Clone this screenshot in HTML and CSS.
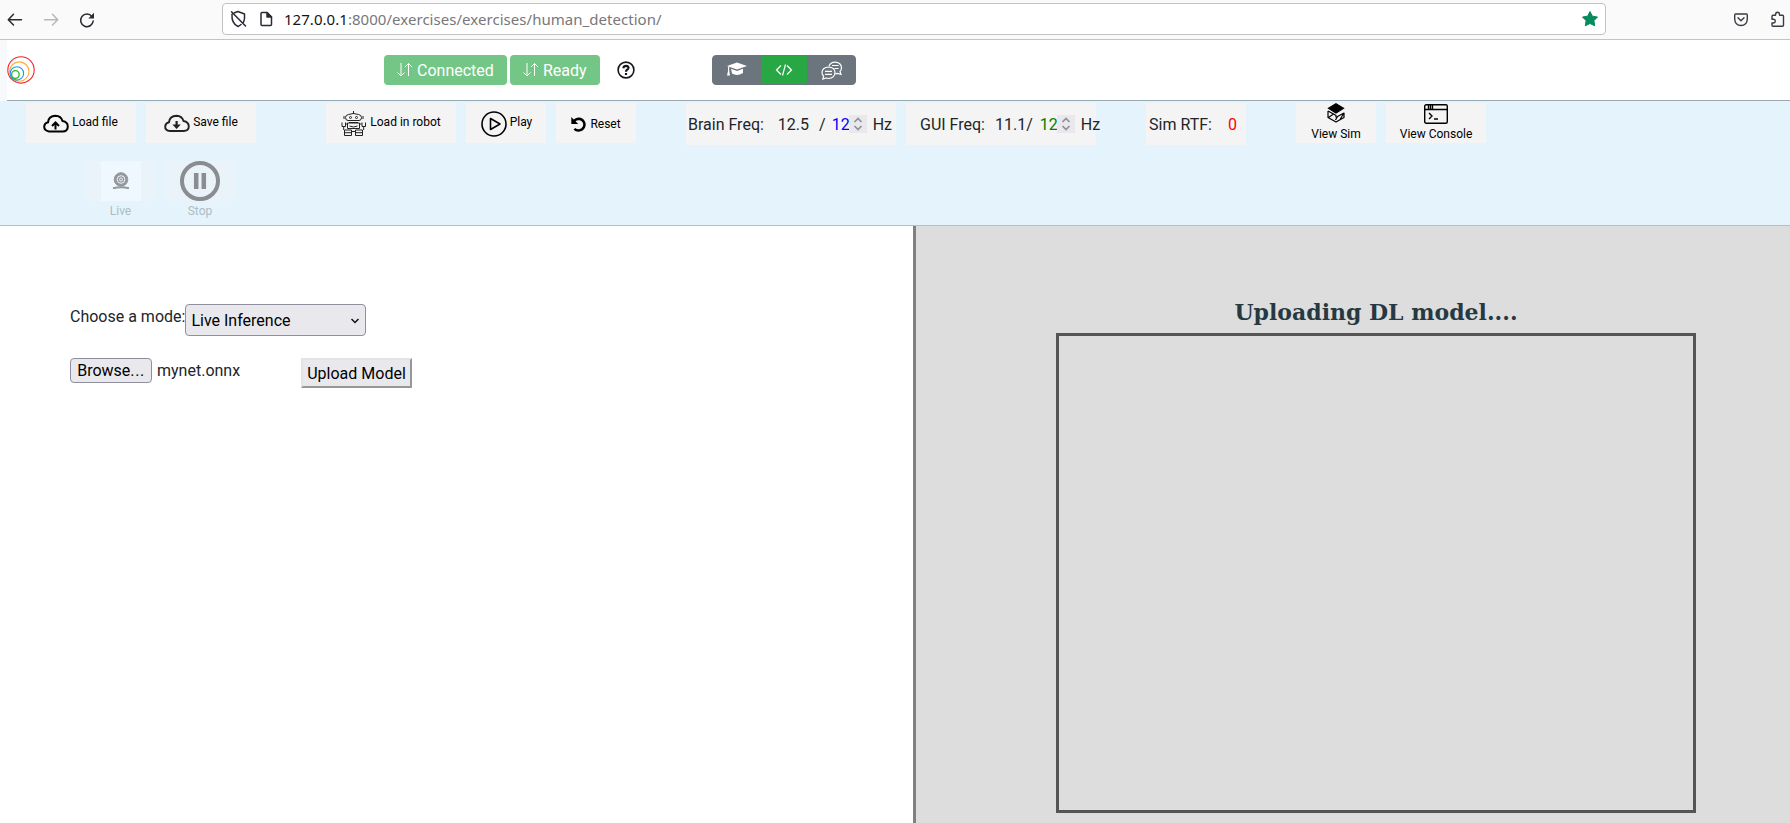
FILE: index.html
```html
<!DOCTYPE html>
<html lang="en">
<head>
<meta charset="utf-8">
<title>Human Detection</title>
<link rel="stylesheet" href="styles.css">
</head>
<body>
<div class="browser">
  <svg class="nav" width="96" height="36" fill="none" stroke="#2b2a33" stroke-width="1.5" stroke-linecap="round" stroke-linejoin="round">
    <path d="M8.500 19.700H21.500M13.500 14.300L8.300 19.700L13.500 25"/>
    <path stroke="#b8b8ba" d="M44.500 19.700H57.500M52.500 14.300L57.700 19.700L52.500 25"/>
    <path d="M92 16.600A6.300 6.300 0 1 0 93.200 21"/><path fill="#2b2a33" stroke="none" d="M94 12.800V18.500H88.300z"/>
  </svg>
  <div class="urlbar">
    <svg class="url-icons" width="52" height="30" fill="none" stroke="#2b2a33" stroke-width="1.500" stroke-linecap="round" stroke-linejoin="round">
      <path d="M11.500 8.800L15 7.500L21.500 10V14.500Q21.200 17 20 19M9 10.300Q8.300 19.500 15 22.500Q16.800 21.600 18 20.500M8.500 7.800L22.500 22"/>
      <path d="M39 8.500H44L48.500 13V20.500Q48.500 21.500 47.500 21.500H39Q38 21.500 38 20.500V9.500Q38 8.500 39 8.500z"/><path fill="#2b2a33" d="M44 8.500V13H48.500z"/>
    </svg>
    <div class="url"><b>127.0.0.1</b>:8000/exercises/exercises/human_detection/</div>
    <svg class="star" width="18" height="18" viewBox="0 0 18 18"><path fill="#058b5e" stroke="#058b5e" stroke-linejoin="round" d="M9 1.500L11.400 6.200L16.500 7L12.900 10.700L13.700 15.800L9 13.500L4.300 15.800L5.100 10.700L1.500 7L6.600 6.200z"/></svg>
  </div>
  <svg class="ext" width="56" height="24" fill="none" stroke="#3b3a43" stroke-width="1.400" stroke-linecap="round" stroke-linejoin="round">
    <path d="M2.700 6H13.300Q14.300 6 14.300 7V11Q14 17.500 8 17.500Q2 17.500 1.700 11V7Q1.700 6 2.700 6zM5 9.800L8 12.700L11 9.800"/>
    <path d="M39 8.500Q39 7.300 40 7.300H42.300Q42.600 7.300 42.600 6.500Q42.600 4.300 44.600 4.300Q46.500 4.300 46.500 6.500Q46.500 7.300 47 7.300H49.500Q50.500 7.300 50.500 8.300V17.300Q50.500 18.300 49.500 18.300H40Q39 18.300 39 17.300V15H40.500Q42.300 14.800 42.300 13Q42.300 11.300 40.500 11.200H39z"/>
  </svg>
</div>
<header class="header">
  <svg class="logo" width="30" height="30" fill="none" stroke-width="1.100">
    <circle cx="14" cy="14.900" r="13.200" stroke="#f5222d"/><circle cx="12.300" cy="16.600" r="9.700" stroke="#fbb034"/><circle cx="9.900" cy="18.400" r="6.700" stroke="#2196e8"/><circle cx="8.400" cy="19.500" r="3.800" stroke="#22b922" stroke-width="1.300"/>
  </svg>
  <div class="status">
    <button class="pill connected"><svg width="16" height="16" fill="none" stroke="#fff"><path d="M4 1V14M.5 10.500L4 14L7.500 10.500M11.500 14V1.500M8 5L11.500 1.500L15 5"/></svg><span>Connected</span></button>
    <button class="pill ready"><svg width="16" height="16" fill="none" stroke="#fff"><path d="M4 1V14M.5 10.500L4 14L7.500 10.500M11.500 14V1.500M8 5L11.500 1.500L15 5"/></svg><span>Ready</span></button>
    <svg class="help" width="18" height="18" fill="none" stroke="#15181b"><circle cx="9" cy="9" r="7.900" stroke-width="1.600"/><path stroke-width="2.200" d="M6.300 7.200Q6.700 4.800 9.100 4.800Q11.600 5 11.500 7Q11.400 8.100 10 8.800Q9 9.400 9 10.700M9 11.900V13.900"/></svg>
  </div>
  <div class="tabs">
    <span class="tab"><svg width="22" height="18" fill="#fff"><path d="M1 5L11 1.500L21 5L11 8.500zM5 7.800L11 10L17 7.800V12Q11 15.500 6 12.500z"/><path d="M2 5.500H3.200V10L4 14.500H1L2 10z"/></svg></span>
    <span class="tab active"><svg width="18" height="14" fill="none" stroke="#fff" stroke-width="1.200"><path d="M6 2.500L1.500 7L6 11.500M12 2.500L16.500 7L12 11.500M10.500 1.500L7.500 12.500"/></svg></span>
    <span class="tab chat"><svg width="22" height="20" fill="none" stroke="#fff" stroke-width="1.200"><path d="M8 5Q10 1 14.500 1.200Q20.500 2 20.500 7Q20.400 9 19 10.500L20 13.300L16.500 12.300L14.500 12.800M7.500 6Q14 6.200 14 11.800Q13.600 17 7.500 17.500L5 17L1.800 18L2.600 15.200Q1 13.500 1 11.500Q1.200 6.500 7.500 6zM4 10.300H11M4 13.300H11M11 4.500H17.500M13.500 7.500H17.500"/></svg></span>
  </div>
</header>
<section class="toolbar">
  <div class="tools">
    <button class="tile load"><svg width="26" height="20" fill="none" stroke="#000" stroke-width="2"><path d="M6 17.500Q1 16.500 1.200 12.500Q1.500 9 5 8.300Q5.600 2 12.500 1.800Q18 2 19.500 7Q24.800 8 24.800 12.500Q24.700 17.500 19.500 17.500zM12.500 15.500V8.500M9 12L12.500 8.500L16 12"/></svg><span>Load file</span></button>
    <button class="tile save"><svg width="26" height="20" fill="none" stroke="#222" stroke-width="1.900"><path d="M6 17Q1 16.500 1.200 12.500Q1.500 9 5 8.300Q5.600 2 12.500 1.800Q18 2 19.500 7Q24.800 8 24.800 12.500Q24.700 17 19.500 17z"/><path fill="#222" stroke="none" d="M11.500 7h2.200v3.500h3.100L12.600 15L8.400 10.500h3.100z"/></svg><span>Save file</span></button>
    <button class="tile robot"><svg width="26" height="26" fill="none" stroke="#222"><path d="M12.500 0V3M7 9.500Q4.500 9.500 4.500 6.500Q4.500 4 7.500 3.500Q12.500 1.500 17.500 3.500Q20.500 4 20.500 6.500Q20.500 9.500 18 9.500zM3 5V8M22 5V8M8 11.500H17M6.500 12H18.500V17.500H6.500zM8.500 15Q12.500 17 16.500 15M4.500 13H6.500M18.500 13H20.500M1 11.500V15.500H4.500V11.500M2.700 15.500V19M21 11.500V15.500H24.500V11.500M22.700 15.500V19M3.500 19H10.500V24.500H3.500zM14.500 19H21.500V24.500H14.500zM3.500 21.700H10.500M14.500 21.700H21.500M10.500 20.500H14.500"/><circle cx="9.500" cy="6.500" r="1"/><circle cx="15.500" cy="6.500" r="1"/></svg><span>Load in robot</span></button>
    <button class="tile play"><svg width="26" height="26" fill="none" stroke="#000" stroke-width="1.600"><circle cx="13" cy="13" r="12"/><path stroke-linejoin="round" d="M9.500 7.500V18.500L19 13z"/></svg><span>Play</span></button>
    <button class="tile reset"><svg width="15" height="15" fill="none" stroke="#000" stroke-width="2.500"><path d="M2 5Q4.500 1.700 8 1.700A5.900 5.900 0 1 1 3.400 11.800"/><path fill="#000" stroke="none" d="M.3 0V7H7.200z"/></svg><span>Reset</span></button>
    <div class="freq brain"><span class="name">Brain Freq:</span><span class="val">12.5</span><span class="slash">/</span><b>12</b><svg class="spin" width="18" height="18" fill="none" stroke="#8f8f9d" stroke-width="1.700"><path d="M5.500 7L9 3.500L12.500 7M5.500 11L9 14.500L12.500 11"/></svg><span>Hz</span></div>
    <div class="freq gui"><span class="name">GUI Freq:</span><span class="val">11.1/</span><b>12</b><svg class="spin" width="18" height="18" fill="none" stroke="#8f8f9d" stroke-width="1.700"><path d="M5.500 7L9 3.500L12.500 7M5.500 11L9 14.500L12.500 11"/></svg><span>Hz</span></div>
    <div class="freq rtf"><span>Sim RTF:</span><b>0</b></div>
    <button class="tile view sim"><svg width="20" height="20" fill="none" stroke="#000" stroke-width="1.200"><path fill="#000" d="M10 .8L17.500 5.200L10 10L2.500 5.200z"/><path stroke-linejoin="round" d="M2 8V14.500L10 19L18 14.500V10L11.500 13.500L9.500 17M2 8L7.500 11L2.500 14.500M7.500 11L10 12.500V14.500M18 10L14 16.500"/></svg><span>View Sim</span></button>
    <button class="tile view console"><svg width="24" height="20" fill="none" stroke="#000" stroke-width="1.400"><rect x=".7" y=".7" width="22.600" height="18.600" rx="1.500"/><path d="M1 5.500H23M4.500 1V5M6.500 1V5M8.500 1V5M5 9L8 12L5 15M10 15H14"/></svg><span>View Console</span></button>
  </div>
  <div class="modes">
    <div class="mode live"><div class="mode-tile"><div class="cam"><svg width="18" height="18" fill="none" stroke="#555"><circle cx="9" cy="7.500" r="6.800" fill="#555"/><circle cx="9" cy="7.500" r="3.800" stroke="#eef" stroke-width="1"/><circle cx="9" cy="7.500" r="1.500" stroke="#eef"/><path stroke-width="2" d="M1 16.200Q9 14.500 17 16.200"/></svg></div></div><span>Live</span></div>
    <div class="mode"><div class="mode-tile"><svg width="40" height="40" fill="none" stroke="#444"><circle cx="20" cy="20" r="18" stroke-width="4"/><path stroke-width="4.500" d="M16.200 12V28M23.800 12V28"/></svg></div><span>Stop</span></div>
  </div>
</section>
<main class="workspace">
  <section class="controls">
    <div class="choose"><label>Choose a mode:</label><div class="select"><span>Live Inference</span><svg width="10" height="8" fill="none" stroke="#111" stroke-width="1.500"><path d="M1.500 2L5 5.500L8.500 2"/></svg></div></div>
    <div class="upload"><button class="browse">Browse<span class="dots">...</span></button><span class="filename">mynet.onnx</span><button class="send">Upload Model</button></div>
  </section>
  <section class="output"><h1>Uploading DL model....</h1><div class="canvas"></div></section>
</main>
</body>
</html>
```
FILE: styles.css
```css
* { box-sizing: border-box; }
body { margin: 0; width: 1790px; height: 823px; overflow: hidden; background: #fff; color: #212529; font: 16px/24px Roboto, sans-serif; display: flex; flex-direction: column; }
svg { display: block; flex: none; }
span { white-space: nowrap; }
button { margin: 0; padding: 0; border: 0; font: inherit; color: #000; }
.browser { height: 40px; flex: none; background: #fafafa; border-bottom: 1px solid #c4c4c5; display: flex; align-items: flex-start; }
.urlbar { margin: 3px 0 0 126px; width: 1384px; height: 32px; background: #fff; border: 1px solid #c2c2c4; border-radius: 4px; display: flex; align-items: center; }
.url { margin-left: 9px; flex: 1; font: 15px/30px "Noto Sans", sans-serif; letter-spacing: .04px; color: #77777c; white-space: nowrap; }
.url b { font-weight: 400; color: #15141a; }
.star { margin-right: 6px; }
.ext { margin: 8px 0 0 127px; }
.header { height: 61px; flex: none; margin-left: 7px; border-bottom: 1px solid #9aa9af; box-shadow: -7px 0 #f8f9fa; display: flex; align-items: flex-start; }
.logo { margin-top: 15px; }
.status { display: flex; align-items: center; margin: 15px 0 0 347px; height: 30px; }
.pill { height: 30px; border-radius: 4px; background: #74c686; color: #fff; display: flex; align-items: center; gap: 4px; padding-left: 13px; }
.pill span { padding-top: 1px; }
.connected { width: 123px; }
.ready { width: 90px; margin-left: 3px; }
.help { margin-left: 17px; }
.tabs { margin: 15px 0 0 77px; height: 30px; width: 144px; display: flex; border: 1px solid #6c757d; border-radius: 4px; overflow: hidden; background: #6c757d; }
.tab { width: 48px; display: flex; align-items: center; justify-content: center; }
.tab.active { width: 46px; background: #28a745; }
.chat { padding: 2px 0 0 2px; }
.toolbar { height: 125px; flex: none; background: #e5f4fc; border-bottom: 1px solid #b8bec1; padding-top: 2px; }
.tools { display: flex; align-items: flex-start; gap: 10px; padding-left: 26px; height: 42px; }
.tile { background: #f4f4f4; width: 110px; height: 40px; display: flex; align-items: center; justify-content: center; gap: 3px; font-size: 12px; line-height: 18px; }
.load { padding-right: 1px; }
.load svg, .save svg { margin-top: 2px; }
.load span, .save span, .robot span, .play span { margin-top: -3px; }
.robot { width: 130px; margin-left: 60px; }
.robot svg, .play svg { margin-top: 1px; }
.play, .reset { width: 80px; }
.play { padding-left: 1px; }
.reset { gap: 4px; }
.reset svg { margin-top: 3px; }
.reset span { padding-top: 2px; }
.freq { height: 42px; background: #f4f4f4; display: flex; align-items: center; padding-top: 1px; }
.freq b { font-weight: 400; }
.brain { width: 210px; margin-left: 40px; padding-left: 2px; }
.brain .val { margin-left: 14px; }
.brain .slash { margin: 0 6px 0 10px; }
.brain b { color: #00f; }
.gui { width: 190px; padding-left: 14px; }
.gui .val { margin-left: 10px; }
.gui b { color: green; margin-left: 7px; }
.spin { background: #e9e9ed; margin: -1px 6px 0 -1px; }
.rtf { width: 100px; margin-left: 40px; padding-left: 3px; }
.rtf b { color: red; margin-left: 16px; }
.view { flex-direction: column; justify-content: flex-start; gap: 2px; }
.sim { width: 80px; margin-left: 40px; }
.console { width: 100px; }
.console svg { margin-top: 1px; }
.console { gap: 1px; }
.modes { display: flex; gap: 10px; padding: 16px 0 0 86px; }
.mode { width: 70px; font-size: 12px; line-height: 18px; text-align: center; color: #aebbc2; }
.mode-tile { height: 40px; background: #eaf2fa; display: flex; justify-content: center; margin-bottom: 1px; }
.live { width: 69px; }
.cam { width: 40px; height: 40px; background: #f0f8ff; display: flex; justify-content: center; align-items: center; }
.mode-tile svg { opacity: .58; }
.workspace { flex: 1; display: flex; min-height: 0; }
.controls { width: 916px; border-right: 3px solid #808080; padding: 78px 0 0 70px; }
.choose { display: flex; align-items: flex-start; }
.choose label { padding-top: 1px; }
.select { width: 181px; height: 32px; background: #e9e9ed; border: 1px solid #8f8f9d; border-radius: 4px; display: flex; align-items: center; justify-content: space-between; padding: 1px 5px 0 5px; color: #000; }
.upload { display: flex; align-items: flex-start; margin-top: 22px; }
.browse { width: 82px; height: 25px; background: #e9e9ed; border: 1px solid #8f8f9d; border-radius: 4px; }
.dots { letter-spacing: .6px; }
.filename { margin-left: 5px; width: 144px; padding-top: 1px; }
.send { width: 111px; height: 30px; background: #e9e9ed; border: 2px solid; border-color: #e3e3e3 #979797 #979797 #e3e3e3; padding-top: 1px; }
.output { flex: 1; background: #ddd; padding: 73px 0 0 140px; }
.output h1 { margin: 0; width: 640px; height: 34px; text-align: center; color: #263943; font: bold 22px/27px "DejaVu Serif", serif; white-space: nowrap; }
.canvas { width: 640px; height: 480px; border: 3px solid #555; }
```
